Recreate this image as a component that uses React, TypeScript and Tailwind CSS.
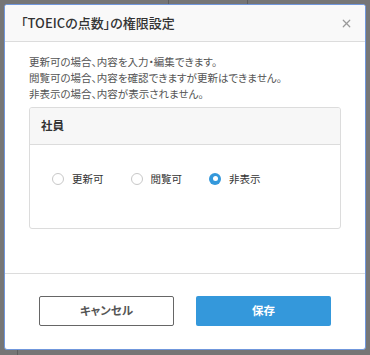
import { X } from "lucide-react";

const options = [
    { label: "更新可", checked: false },
    { label: "閲覧可", checked: false },
    { label: "非表示", checked: true },
];

const Radio = ({ label, checked }: { label: string; checked: boolean }) => (
    <label className="flex items-center gap-[8px]">
        {checked ? (
            <span className="w-[12px] h-[12px] rounded-full bg-[#3498db] flex items-center justify-center">
                <span className="w-[5px] h-[5px] rounded-full bg-white" />
            </span>
        ) : (
            <span className="w-[12px] h-[12px] rounded-full border border-[#c8c8c8] bg-white" />
        )}
        <span className="text-[10.5px] text-[#333]">{label}</span>
    </label>
);

export default function App() {
    return (
        <div
            className="relative w-[370px] h-[355px] bg-[#767676] overflow-hidden [font-feature-settings:'palt']"
            style={{ fontFamily: '"Noto Sans CJK JP", "Noto Sans", sans-serif' }}
        >
            {/* page behind the overlay */}
            <div className="absolute top-[-14px] left-[168px] w-[80px] h-[19px] border border-[#5e5e5e] text-[10px] text-[#4a4a4a] text-center leading-[16px]">
                就労を追加
            </div>
            <div className="absolute bottom-0 left-[17px] w-px h-[6px] bg-[#5e5e5e]" />

            <div className="absolute left-[4px] top-[4px] w-[362px] h-[346px] bg-white border border-[#7097dc] rounded-[3px] flex flex-col overflow-hidden">
                {/* header */}
                <div className="h-[37px] shrink-0 bg-[#f9f9f9] border-b border-[#dcdcdc] flex items-center justify-between pl-[16px] pr-[12px]">
                    <h1 className="text-[13px] font-medium text-[#333]">「TOEICの点数」の権限設定</h1>
                    <X className="w-[13px] h-[13px] text-[#9a9a9a]" strokeWidth={2.2} />
                </div>

                {/* body */}
                <div className="px-[24px] pt-[12px] h-[231px] shrink-0">
                    <div className="text-[10.5px] leading-[16px] text-[#555]">
                        <p>更新可の場合、内容を入力・編集できます。</p>
                        <p>閲覧可の場合、内容を確認できますが更新はできません。</p>
                        <p>非表示の場合、内容が表示されません。</p>
                    </div>

                    <div className="mt-[5px] border border-[#dcdcdc] rounded-[3px] overflow-hidden">
                        <div className="h-[37px] bg-[#f7f7f7] border-b border-[#dcdcdc] flex items-center px-[11px]">
                            <span className="text-[11.5px] font-bold text-[#333]">社員</span>
                        </div>
                        <div className="h-[83px] flex items-center gap-[27px] pl-[22px] pb-[16px]">
                            {options.map((o) => (
                                <Radio key={o.label} label={o.label} checked={o.checked} />
                            ))}
                        </div>
                    </div>
                </div>

                {/* footer */}
                <div className="flex-1 border-t border-[#dcdcdc] flex items-start justify-between px-[34px] pt-[22px]">
                    <button className="w-[135px] h-[30px] border border-[#666] rounded-[2px] bg-white text-[11.5px] font-bold text-[#555]">
                        キャンセル
                    </button>
                    <button className="w-[135px] h-[30px] rounded-[2px] bg-[#3498db] text-[11.5px] font-bold text-white">
                        保存
                    </button>
                </div>
            </div>
        </div>
    );
}
